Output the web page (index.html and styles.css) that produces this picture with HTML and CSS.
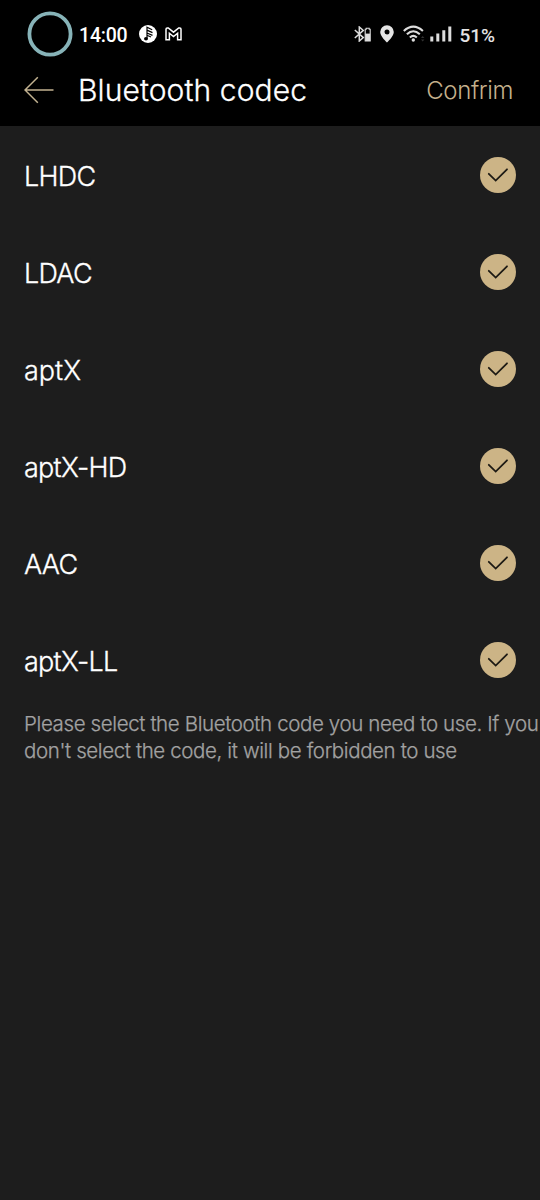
FILE: index.html
```html
<!DOCTYPE html>
<html lang="en">
<head>
<meta charset="utf-8">
<title>Bluetooth codec</title>
<link rel="stylesheet" href="styles.css">
</head>
<body>
<header class="top">
  <div class="status">
    <svg class="ring" width="46" height="46" viewBox="0 0 46 46"><circle cx="23" cy="23" r="20.6"/></svg>
    <span class="clock">14:00</span>
    <svg class="note" width="18" height="18" viewBox="0 0 18 18"><circle cx="9" cy="9" r="9" fill="#fff"/><path d="M8 13.500V2.200L13.200 4.800M8.500 5.400l5 2.200M8.500 8.200l5 2.200M8.500 10.500l3.500 1.500" fill="none" stroke="#000" stroke-width="1.200"/><ellipse cx="7" cy="13.700" rx="2" ry="1.800"/></svg>
    <svg class="mail" width="17" height="14" viewBox="0 0 17 14"><path d="M1 12.800V2.200Q1 1 2.200 1H3.300L8.500 5.200 13.700 1H14.800Q16 1 16 2.200V12.800H12.600V6.200L8.500 9.500 4.400 6.200V12.800Z"/></svg>
    <span class="spacer"></span>
    <svg class="bt" width="17" height="16" viewBox="0 0 17 16"><path d="M.8 4 9.300 11.600 5.300 15V1L9.300 4.400.8 12" fill="none" stroke="#ddd" stroke-width="1.500"/><path d="M12.200 3.200V2.200h3v1h1V15h-5V3.200Z" fill="none" stroke="#ddd" stroke-width="1.100"/><path d="M11.200 7.600h5V15h-5Z" fill="#ddd"/></svg>
    <svg class="pin" width="14" height="18" viewBox="0 0 14 18"><path fill-rule="evenodd" d="M7 .3A6.800 6.800 0 0 0 .2 7.100C.2 11.500 7 17.600 7 17.600S13.800 11.500 13.800 7.100A6.800 6.800 0 0 0 7 .3ZM7 4.500a2.500 2.500 0 1 1 0 5 2.500 2.500 0 0 1 0-5Z" fill="#e4e4e4"/></svg>
    <svg class="wifi" width="22" height="18" viewBox="0 0 22 18"><g fill="none" stroke="#ddd" stroke-width="2.100"><path d="M.8 6Q10.300-2.600 19.900 6"/><path d="M3.900 9.300Q10.300 3.200 16.800 9.300"/><path d="M6.900 12.500Q10.300 9.200 13.800 12.500"/></g><circle cx="10.300" cy="15" r="1.700" fill="#ddd"/><path d="M18 13l1.700-2 1.700 2ZM18 14.500l1.700 2 1.700-2Z" fill="#333"/></svg>
    <svg class="signal" width="22" height="16" viewBox="0 0 22 16"><path d="M.3 10.500h3V15.500h-3ZM6.300 7.500h3v8h-3ZM12.300 4.300h3v11.200h-3ZM18.300.5h3v15h-3Z" fill="#ddd"/></svg>
    <span class="battery">51%</span>
  </div>
  <div class="bar">
    <svg class="back" width="30" height="28" viewBox="0 0 30 28"><path d="M29.500 14H1M13.800 1.200 1 14 13.800 26.800"/></svg>
    <h1 class="title">Bluetooth codec</h1>
    <span class="confirm">Confrim</span>
  </div>
</header>
<main>
  <ul class="list">
    <li class="row"><span class="tight">LHDC</span><svg class="check" viewBox="0 0 36 36"><circle cx="18" cy="18" r="18"/><path d="M8.800 16.800 15.700 23.600 27 12.300"/></svg></li>
    <li class="row"><span class="tight">LDAC</span><svg class="check" viewBox="0 0 36 36"><circle cx="18" cy="18" r="18"/><path d="M8.800 16.800 15.700 23.600 27 12.300"/></svg></li>
    <li class="row"><span>aptX</span><svg class="check" viewBox="0 0 36 36"><circle cx="18" cy="18" r="18"/><path d="M8.800 16.800 15.700 23.600 27 12.300"/></svg></li>
    <li class="row"><span class="tight">aptX-HD</span><svg class="check" viewBox="0 0 36 36"><circle cx="18" cy="18" r="18"/><path d="M8.800 16.800 15.700 23.600 27 12.300"/></svg></li>
    <li class="row"><span class="tight">AAC</span><svg class="check" viewBox="0 0 36 36"><circle cx="18" cy="18" r="18"/><path d="M8.800 16.800 15.700 23.600 27 12.300"/></svg></li>
    <li class="row"><span class="tight">aptX-LL</span><svg class="check" viewBox="0 0 36 36"><circle cx="18" cy="18" r="18"/><path d="M8.800 16.800 15.700 23.600 27 12.300"/></svg></li>
  </ul>
  <p class="hint">Please select the Bluetooth code you need to use. If you<br>don't select the code, it will be forbidden to use</p>
</main>
</body>
</html>
```
FILE: styles.css
```css
* { box-sizing: border-box; }
body {
  margin: 0;
  height: 1200px;
  overflow: hidden;
  background: #1d1d1d;
  color: #fff;
  font-family: Inter, sans-serif;
  font-weight: 300;
}
svg { display: block; flex: none; }
.top { height: 126px; background: #000; }
.status {
  display: flex;
  align-items: center;
  height: 68px;
  padding: 0 45px 0 27px;
  font-family: Roboto, sans-serif;
  font-weight: 500;
  font-size: 20px;
}
.ring circle { fill: none; stroke: #87b3b8; stroke-width: 3.8; }
.clock { width: 60px; margin: 3px 0 0 6px; font-size: 19.5px; letter-spacing: -0.2px; }
.note { margin-right: 8px; }
.mail path { fill: none; stroke: #fff; stroke-width: 1.5; }
.spacer { flex: 1; }
.bt { margin-right: 9px; }
.pin { margin-right: 9px; }
.wifi { margin-right: 5px; }
.signal { margin-right: 7px; }
.battery { margin-top: 3px; color: #e4e4e4; font-size: 19px; }
.bar { display: flex; align-items: center; height: 44px; padding: 0 27px 0 24px; }
.back path { fill: none; stroke: #c3b391; stroke-width: 1.5; }
.title {
  flex: 1;
  margin: 0 0 0 24px;
  font-size: 30px;
  font-weight: 300;
  letter-spacing: 0.1px;
  white-space: nowrap;
  -webkit-text-stroke: 0.3px;
}
.confirm { color: #c5b18c; font-size: 24px; letter-spacing: -0.4px; }
.list { margin: 0; padding: 0; list-style: none; }
.row {
  display: flex;
  align-items: center;
  justify-content: space-between;
  height: 97px;
  padding: 3px 24px 0;
  font-size: 27px;
  -webkit-text-stroke: 0.3px;
}
.tight { letter-spacing: -0.75px; }
.check { width: 36px; height: 36px; margin-top: -3px; }
.check circle { fill: #ccb486; }
.check path { fill: none; stroke: #1d1a14; stroke-width: 1.8; stroke-linecap: round; }
.hint {
  margin: 2px 0 0 24px;
  color: #a2a2a2;
  font-size: 20.5px;
  line-height: 27px;
  letter-spacing: -0.38px;
  white-space: nowrap;
  -webkit-text-stroke: 0.25px;
}
```
